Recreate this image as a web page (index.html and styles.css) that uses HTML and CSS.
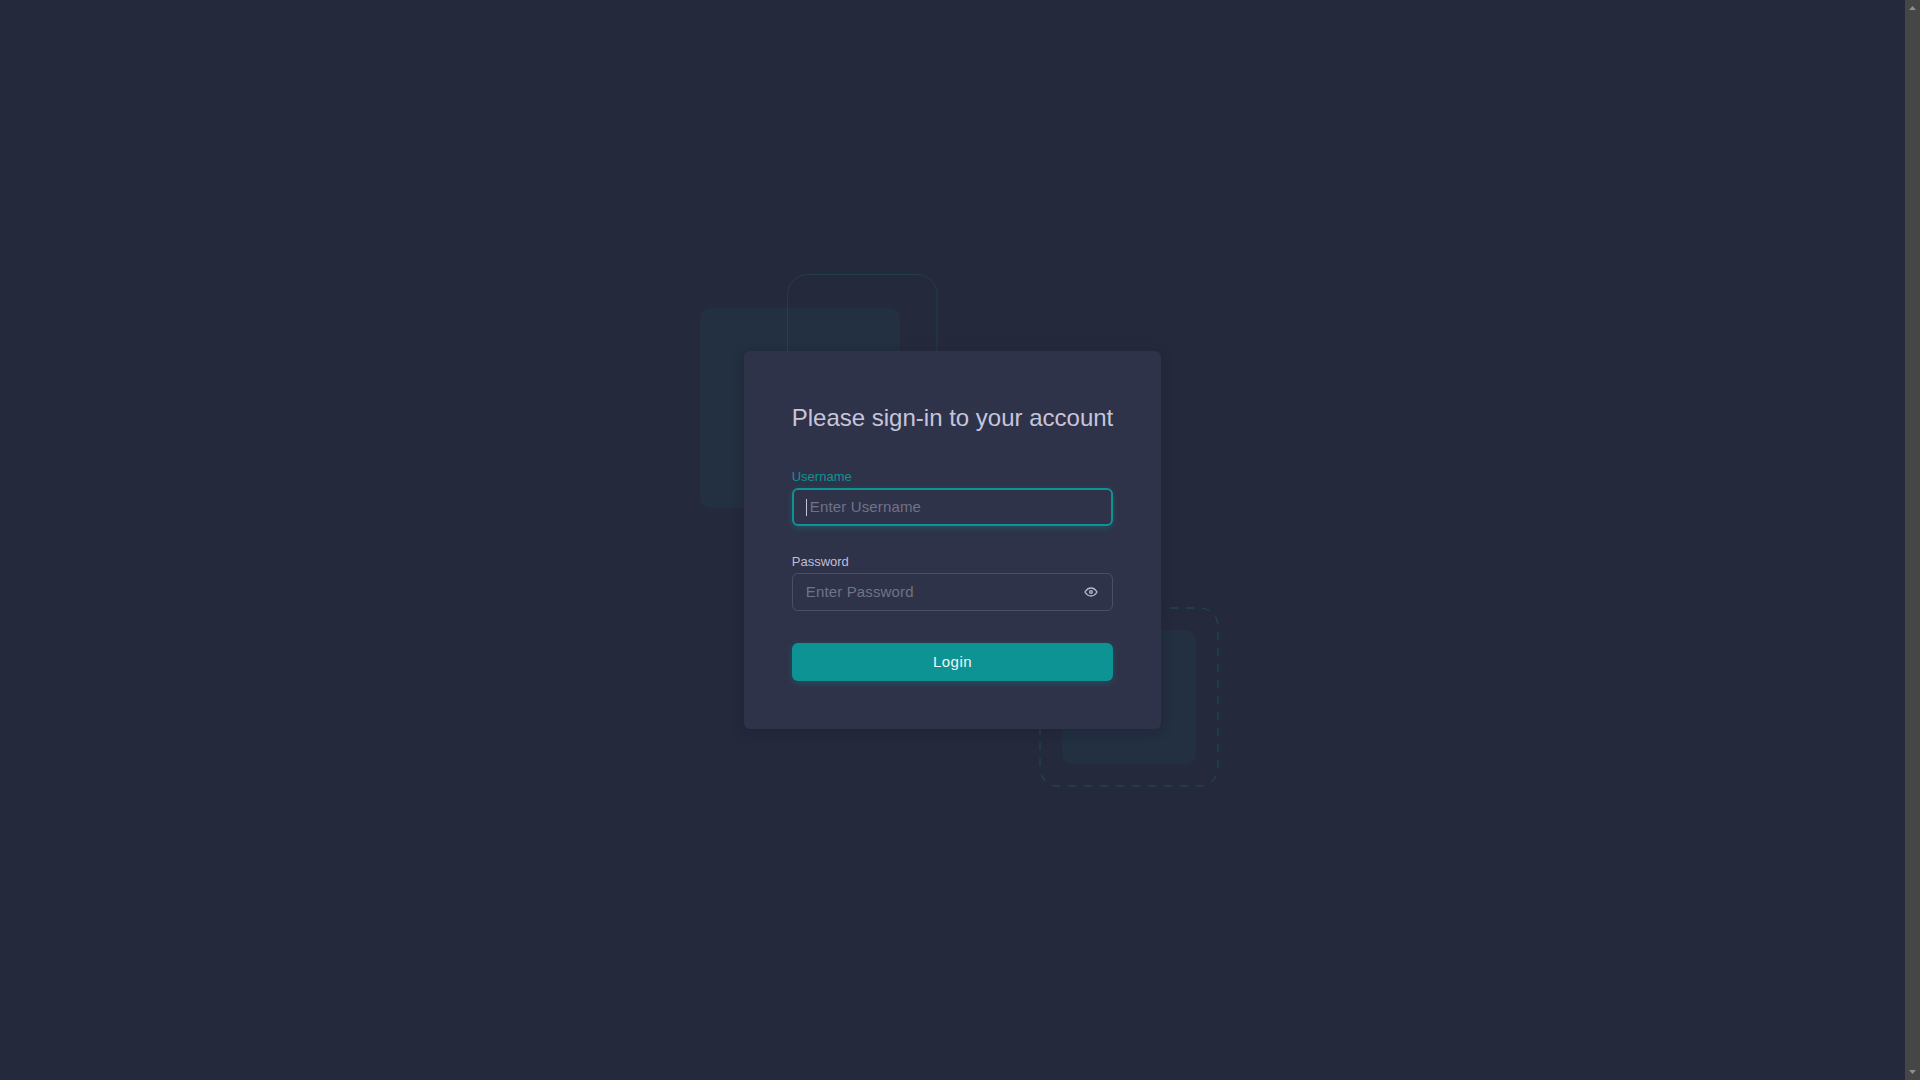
FILE: index.html
```html
<!DOCTYPE html>
<html lang="en">
<head>
<meta charset="utf-8">
<title>Login</title>
<link rel="stylesheet" href="styles.css">
</head>
<body>
<div class="page">
<main class="auth">
  <div class="auth-inner">
    <svg class="shape shape-top" width="238" height="234" viewBox="0 0 238 234" aria-hidden="true">
      <rect class="shape-fill" x="0" y="34" width="200" height="200" rx="10"/>
      <rect class="shape-line" x="87.500" y="0.500" width="149.500" height="149.500" rx="20"/>
    </svg>
    <svg class="shape shape-bottom" width="180" height="180" viewBox="0 0 180 180" aria-hidden="true">
      <rect class="shape-fill" x="23" y="23" width="134" height="134" rx="10"/>
      <rect class="shape-dash" x="1" y="1" width="178" height="178" rx="18"/>
    </svg>
    <section class="card">
      <h1 class="title">Please sign-in to your account</h1>
      <form class="form">
        <div class="field">
          <label class="label label-active" for="username">Username</label>
          <div class="control">
            <input class="input input-active" id="username" type="text" placeholder="Enter Username">
            <span class="caret"></span>
          </div>
        </div>
        <div class="field">
          <label class="label" for="password">Password</label>
          <div class="control">
            <input class="input" id="password" type="password" placeholder="Enter Password">
            <svg class="eye" width="16" height="16" viewBox="0 0 24 24" fill="none" stroke="currentColor" stroke-width="2" stroke-linecap="round" stroke-linejoin="round" aria-hidden="true">
              <path d="M10 12a2 2 0 1 0 4 0a2 2 0 0 0 -4 0"/>
              <path d="M21 12c-2.4 4 -5.4 6 -9 6c-3.600 0 -6.600 -2 -9 -6c2.400 -4 5.400 -6 9 -6c3.600 0 6.600 2 9 6"/>
            </svg>
          </div>
        </div>
        <button class="button" type="button">Login</button>
      </form>
    </section>
  </div>
</main>
<div class="scrollbar" aria-hidden="true">
  <svg class="arrow" width="7" height="4" viewBox="0 0 7 4"><polygon points="3.5,0 7,4 0,4"/></svg>
  <svg class="arrow" width="7" height="4" viewBox="0 0 7 4"><polygon points="0,0 7,0 3.5,4"/></svg>
</div>
</div>
</body>
</html>
```
FILE: styles.css
```css
* { box-sizing: border-box; }
html {
  background: #25293c;
}
body {
  margin: 0;
  background: #25293c;
  font-family: "Liberation Sans", Arial, sans-serif;
  color: #c6c5dc;
}
.page {
  display: flex;
  height: 100vh;
  overflow: hidden;
}
.auth {
  flex: 1;
  min-width: 0;
  display: flex;
  align-items: center;
  justify-content: center;
}
.scrollbar {
  flex: none;
  width: 15px;
  padding: 6px 0;
  display: flex;
  flex-direction: column;
  align-items: center;
  justify-content: space-between;
  background: #464646;
}
.arrow {
  display: block;
  fill: #8f8f8f;
}
.auth-inner {
  position: relative;
}
.shape {
  position: absolute;
  display: block;
}
.shape-top {
  left: -44px;
  top: -77px;
}
.shape-bottom {
  right: -58px;
  bottom: -58px;
}
.shape-fill {
  fill: #0d9394;
  fill-opacity: 0.07;
}
.shape-line {
  fill: none;
  stroke: #0d9394;
  stroke-opacity: 0.2;
  stroke-width: 1;
}
.shape-dash {
  fill: none;
  stroke: #0d9394;
  stroke-opacity: 0.24;
  stroke-width: 1.4;
  stroke-dasharray: 8 8;
}
.card {
  position: relative;
  padding: 48px;
  background: #2f3349;
  border-radius: 6px;
  box-shadow: 0 3px 12px rgba(15, 20, 34, 0.26);
}
.title {
  margin: 0 0 28px;
  font-size: 24px;
  font-weight: 400;
  line-height: 38px;
  white-space: nowrap;
  color: #c6c5dc;
}
.form {
  display: flex;
  flex-direction: column;
}
.field {
  margin-bottom: 24px;
}
.label {
  display: block;
  font-size: 13px;
  line-height: 23px;
  color: #bfbed4;
}
.label-active {
  color: #0d9394;
}
.control {
  position: relative;
}
.input {
  display: block;
  width: 100%;
  height: 38px;
  padding: 0 14px 2px 13px;
  border: 1px solid #4a4e69;
  border-radius: 6px;
  background: transparent;
  font: 15px/22px "Liberation Sans", Arial, sans-serif;
  letter-spacing: 0.15px;
  color: #c6c5dc;
  outline: 0;
}
.input::placeholder {
  color: #70728a;
  opacity: 1;
}
.input-active {
  padding: 0 12px 2px 16px;
  border: 2px solid #0d9394;
  box-shadow: 0 2px 6px rgba(13, 147, 148, 0.3);
}
.caret {
  position: absolute;
  left: 14px;
  top: 11px;
  width: 1px;
  height: 17px;
  background: #c6c5dc;
}
.eye {
  position: absolute;
  right: 14px;
  top: 11px;
  color: #b9b8ce;
}
.button {
  display: block;
  width: 100%;
  height: 38px;
  margin-top: 8px;
  border: 0;
  border-radius: 6px;
  background: #0d9394;
  box-shadow: 0 2px 6px rgba(13, 147, 148, 0.3);
  font: 15px/22px "Liberation Sans", Arial, sans-serif;
  letter-spacing: 0.43px;
  color: #f2f5f7;
}
```
